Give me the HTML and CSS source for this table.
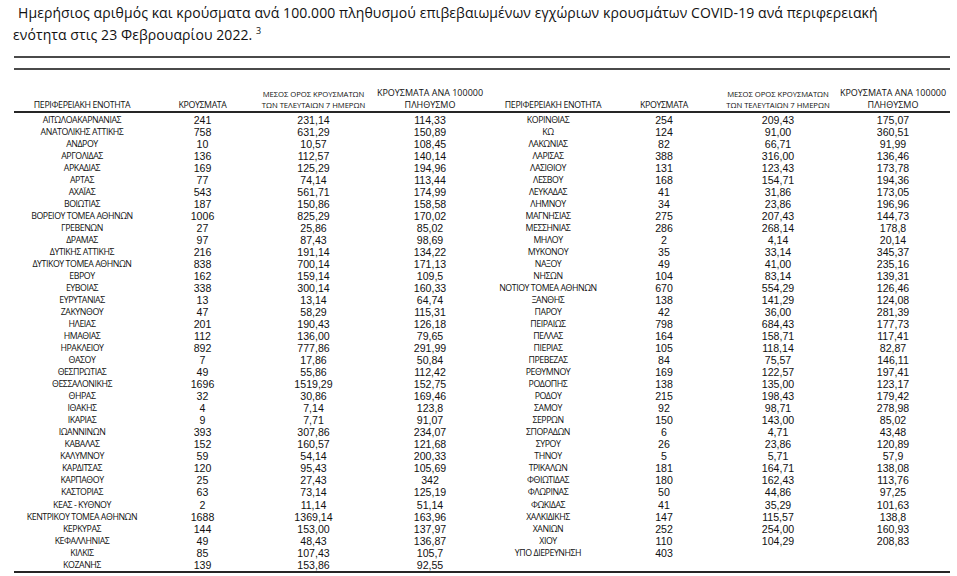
FILE: index.html
```html
<!DOCTYPE html>
<html lang="el">
<head>
<meta charset="utf-8">
<title>Κρούσματα COVID-19 ανά περιφερειακή ενότητα</title>
<link rel="stylesheet" href="styles.css">
</head>
<body>
<div class="page">
  <h1 class="title">
    <span class="title-line first">Ημερήσιος αριθμός και κρούσματα ανά 100.000 πληθυσμού επιβεβαιωμένων εγχώριων κρουσμάτων COVID-19 ανά περιφερειακή</span>
    <span class="title-line">ενότητα στις 23 Φεβρουαρίου 2022. <sup class="note">3</sup></span>
  </h1>
  <div class="rule rule-a"></div>
  <div class="rule rule-b"></div>
  <table class="data">
    <colgroup>
      <col class="c-name-l"><col class="c-cnt-l"><col class="c-avg-l"><col class="c-per-l">
      <col class="c-name-r"><col class="c-cnt-r"><col class="c-avg-r"><col class="c-per-r">
    </colgroup>
    <thead>
      <tr>
        <th class="h-name">ΠΕΡΙΦΕΡΕΙΑΚΗ ΕΝΟΤΗΤΑ</th>
        <th class="h-name">ΚΡΟΥΣΜΑΤΑ</th>
        <th class="h-avg">ΜΕΣΟΣ ΟΡΟΣ ΚΡΟΥΣΜΑΤΩΝ<br>ΤΩΝ ΤΕΛΕΥΤΑΙΩΝ 7 ΗΜΕΡΩΝ</th>
        <th class="h-per">ΚΡΟΥΣΜΑΤΑ ΑΝΑ 100000<br>ΠΛΗΘΥΣΜΟ</th>
        <th class="h-name h-shift">ΠΕΡΙΦΕΡΕΙΑΚΗ ΕΝΟΤΗΤΑ</th>
        <th class="h-name">ΚΡΟΥΣΜΑΤΑ</th>
        <th class="h-avg">ΜΕΣΟΣ ΟΡΟΣ ΚΡΟΥΣΜΑΤΩΝ<br>ΤΩΝ ΤΕΛΕΥΤΑΙΩΝ 7 ΗΜΕΡΩΝ</th>
        <th class="h-per">ΚΡΟΥΣΜΑΤΑ ΑΝΑ 100000<br>ΠΛΗΘΥΣΜΟ</th>
      </tr>
    </thead>
    <tbody>
      <tr><td class="n">ΑΙΤΩΛΟΑΚΑΡΝΑΝΙΑΣ</td><td>241</td><td>231,14</td><td>114,33</td><td class="n">ΚΟΡΙΝΘΙΑΣ</td><td>254</td><td>209,43</td><td>175,07</td></tr>
      <tr><td class="n">ΑΝΑΤΟΛΙΚΗΣ ΑΤΤΙΚΗΣ</td><td>758</td><td>631,29</td><td>150,89</td><td class="n">ΚΩ</td><td>124</td><td>91,00</td><td>360,51</td></tr>
      <tr><td class="n">ΑΝΔΡΟΥ</td><td>10</td><td>10,57</td><td>108,45</td><td class="n">ΛΑΚΩΝΙΑΣ</td><td>82</td><td>66,71</td><td>91,99</td></tr>
      <tr><td class="n">ΑΡΓΟΛΙΔΑΣ</td><td>136</td><td>112,57</td><td>140,14</td><td class="n">ΛΑΡΙΣΑΣ</td><td>388</td><td>316,00</td><td>136,46</td></tr>
      <tr><td class="n">ΑΡΚΑΔΙΑΣ</td><td>169</td><td>125,29</td><td>194,96</td><td class="n">ΛΑΣΙΘΙΟΥ</td><td>131</td><td>123,43</td><td>173,78</td></tr>
      <tr><td class="n">ΑΡΤΑΣ</td><td>77</td><td>74,14</td><td>113,44</td><td class="n">ΛΕΣΒΟΥ</td><td>168</td><td>154,71</td><td>194,36</td></tr>
      <tr><td class="n">ΑΧΑΪΑΣ</td><td>543</td><td>561,71</td><td>174,99</td><td class="n">ΛΕΥΚΑΔΑΣ</td><td>41</td><td>31,86</td><td>173,05</td></tr>
      <tr><td class="n">ΒΟΙΩΤΙΑΣ</td><td>187</td><td>150,86</td><td>158,58</td><td class="n">ΛΗΜΝΟΥ</td><td>34</td><td>23,86</td><td>196,96</td></tr>
      <tr><td class="n">ΒΟΡΕΙΟΥ ΤΟΜΕΑ ΑΘΗΝΩΝ</td><td>1006</td><td>825,29</td><td>170,02</td><td class="n">ΜΑΓΝΗΣΙΑΣ</td><td>275</td><td>207,43</td><td>144,73</td></tr>
      <tr><td class="n">ΓΡΕΒΕΝΩΝ</td><td>27</td><td>25,86</td><td>85,02</td><td class="n">ΜΕΣΣΗΝΙΑΣ</td><td>286</td><td>268,14</td><td>178,8</td></tr>
      <tr><td class="n">ΔΡΑΜΑΣ</td><td>97</td><td>87,43</td><td>98,69</td><td class="n">ΜΗΛΟΥ</td><td>2</td><td>4,14</td><td>20,14</td></tr>
      <tr><td class="n">ΔΥΤΙΚΗΣ ΑΤΤΙΚΗΣ</td><td>216</td><td>191,14</td><td>134,22</td><td class="n">ΜΥΚΟΝΟΥ</td><td>35</td><td>33,14</td><td>345,37</td></tr>
      <tr><td class="n">ΔΥΤΙΚΟΥ ΤΟΜΕΑ ΑΘΗΝΩΝ</td><td>838</td><td>700,14</td><td>171,13</td><td class="n">ΝΑΞΟΥ</td><td>49</td><td>41,00</td><td>235,16</td></tr>
      <tr><td class="n">ΕΒΡΟΥ</td><td>162</td><td>159,14</td><td>109,5</td><td class="n">ΝΗΣΩΝ</td><td>104</td><td>83,14</td><td>139,31</td></tr>
      <tr><td class="n">ΕΥΒΟΙΑΣ</td><td>338</td><td>300,14</td><td>160,33</td><td class="n">ΝΟΤΙΟΥ ΤΟΜΕΑ ΑΘΗΝΩΝ</td><td>670</td><td>554,29</td><td>126,46</td></tr>
      <tr><td class="n">ΕΥΡΥΤΑΝΙΑΣ</td><td>13</td><td>13,14</td><td>64,74</td><td class="n">ΞΑΝΘΗΣ</td><td>138</td><td>141,29</td><td>124,08</td></tr>
      <tr><td class="n">ΖΑΚΥΝΘΟΥ</td><td>47</td><td>58,29</td><td>115,31</td><td class="n">ΠΑΡΟΥ</td><td>42</td><td>36,00</td><td>281,39</td></tr>
      <tr><td class="n">ΗΛΕΙΑΣ</td><td>201</td><td>190,43</td><td>126,18</td><td class="n">ΠΕΙΡΑΙΩΣ</td><td>798</td><td>684,43</td><td>177,73</td></tr>
      <tr><td class="n">ΗΜΑΘΙΑΣ</td><td>112</td><td>136,00</td><td>79,65</td><td class="n">ΠΕΛΛΑΣ</td><td>164</td><td>158,71</td><td>117,41</td></tr>
      <tr><td class="n">ΗΡΑΚΛΕΙΟΥ</td><td>892</td><td>777,86</td><td>291,99</td><td class="n">ΠΙΕΡΙΑΣ</td><td>105</td><td>118,14</td><td>82,87</td></tr>
      <tr><td class="n">ΘΑΣΟΥ</td><td>7</td><td>17,86</td><td>50,84</td><td class="n">ΠΡΕΒΕΖΑΣ</td><td>84</td><td>75,57</td><td>146,11</td></tr>
      <tr><td class="n">ΘΕΣΠΡΩΤΙΑΣ</td><td>49</td><td>55,86</td><td>112,42</td><td class="n">ΡΕΘΥΜΝΟΥ</td><td>169</td><td>122,57</td><td>197,41</td></tr>
      <tr><td class="n">ΘΕΣΣΑΛΟΝΙΚΗΣ</td><td>1696</td><td>1519,29</td><td>152,75</td><td class="n">ΡΟΔΟΠΗΣ</td><td>138</td><td>135,00</td><td>123,17</td></tr>
      <tr><td class="n">ΘΗΡΑΣ</td><td>32</td><td>30,86</td><td>169,46</td><td class="n">ΡΟΔΟΥ</td><td>215</td><td>198,43</td><td>179,42</td></tr>
      <tr><td class="n">ΙΘΑΚΗΣ</td><td>4</td><td>7,14</td><td>123,8</td><td class="n">ΣΑΜΟΥ</td><td>92</td><td>98,71</td><td>278,98</td></tr>
      <tr><td class="n">ΙΚΑΡΙΑΣ</td><td>9</td><td>7,71</td><td>91,07</td><td class="n">ΣΕΡΡΩΝ</td><td>150</td><td>143,00</td><td>85,02</td></tr>
      <tr><td class="n">ΙΩΑΝΝΙΝΩΝ</td><td>393</td><td>307,86</td><td>234,07</td><td class="n">ΣΠΟΡΑΔΩΝ</td><td>6</td><td>4,71</td><td>43,48</td></tr>
      <tr><td class="n">ΚΑΒΑΛΑΣ</td><td>152</td><td>160,57</td><td>121,68</td><td class="n">ΣΥΡΟΥ</td><td>26</td><td>23,86</td><td>120,89</td></tr>
      <tr><td class="n">ΚΑΛΥΜΝΟΥ</td><td>59</td><td>54,14</td><td>200,33</td><td class="n">ΤΗΝΟΥ</td><td>5</td><td>5,71</td><td>57,9</td></tr>
      <tr><td class="n">ΚΑΡΔΙΤΣΑΣ</td><td>120</td><td>95,43</td><td>105,69</td><td class="n">ΤΡΙΚΑΛΩΝ</td><td>181</td><td>164,71</td><td>138,08</td></tr>
      <tr><td class="n">ΚΑΡΠΑΘΟΥ</td><td>25</td><td>27,43</td><td>342</td><td class="n">ΦΘΙΩΤΙΔΑΣ</td><td>180</td><td>162,43</td><td>113,76</td></tr>
      <tr><td class="n">ΚΑΣΤΟΡΙΑΣ</td><td>63</td><td>73,14</td><td>125,19</td><td class="n">ΦΛΩΡΙΝΑΣ</td><td>50</td><td>44,86</td><td>97,25</td></tr>
      <tr><td class="n">ΚΕΑΣ - ΚΥΘΝΟΥ</td><td>2</td><td>11,14</td><td>51,14</td><td class="n">ΦΩΚΙΔΑΣ</td><td>41</td><td>35,29</td><td>101,63</td></tr>
      <tr><td class="n">ΚΕΝΤΡΙΚΟΥ ΤΟΜΕΑ ΑΘΗΝΩΝ</td><td>1688</td><td>1369,14</td><td>163,96</td><td class="n">ΧΑΛΚΙΔΙΚΗΣ</td><td>147</td><td>115,57</td><td>138,8</td></tr>
      <tr><td class="n">ΚΕΡΚΥΡΑΣ</td><td>144</td><td>153,00</td><td>137,97</td><td class="n">ΧΑΝΙΩΝ</td><td>252</td><td>254,00</td><td>160,93</td></tr>
      <tr><td class="n">ΚΕΦΑΛΛΗΝΙΑΣ</td><td>49</td><td>48,43</td><td>136,87</td><td class="n">ΧΙΟΥ</td><td>110</td><td>104,29</td><td>208,83</td></tr>
      <tr><td class="n">ΚΙΛΚΙΣ</td><td>85</td><td>107,43</td><td>105,7</td><td class="n">ΥΠΟ ΔΙΕΡΕΥΝΗΣΗ</td><td>403</td><td></td><td></td></tr>
      <tr><td class="n">ΚΟΖΑΝΗΣ</td><td>139</td><td>153,86</td><td>92,55</td><td class="n"></td><td></td><td></td><td></td></tr>
    </tbody>
  </table>
</div>
</body>
</html>
```

FILE: styles.css
```css
html, body {
  margin: 0;
  padding: 0;
  background: #ffffff;
}

body {
  font-family: "Open Sans", "Noto Sans", "DejaVu Sans", sans-serif;
  color: #111111;
  width: 957px;
  height: 576px;
  overflow: hidden;
}

.page {
  padding-top: 1.6px;
}

.title {
  margin: 0;
  padding-left: 13px;
  font-size: 14px;
  font-weight: 400;
  line-height: 22.5px;
  letter-spacing: 0.08px;
  color: #111111;
}

.title-line {
  display: block;
  white-space: nowrap;
}

.title-line.first {
  padding-left: 5px;
}

.note {
  font-size: 9px;
  line-height: 0;
  vertical-align: 6px;
  letter-spacing: 0;
}

.rule {
  margin-left: 14px;
  width: 936px;
  border-top: 2px solid #4a4a4a;
}

.rule-a {
  margin-top: 9.4px;
}

.rule-b {
  margin-top: 10px;
}

.data {
  margin-left: 14px;
  width: 936px;
  table-layout: fixed;
  border-collapse: collapse;
  border-bottom: 2px solid #262626;
}

.c-name-l { width: 136px; }
.c-cnt-l  { width: 105px; }
.c-avg-l  { width: 117px; }
.c-per-l  { width: 116px; }
.c-name-r { width: 120px; }
.c-cnt-r  { width: 112px; }
.c-avg-r  { width: 116px; }
.c-per-r  { width: 114px; }

.data th {
  height: 41.5px;
  padding: 0;
  vertical-align: bottom;
  text-align: center;
  font-weight: 400;
  line-height: 11px;
  white-space: nowrap;
  border-bottom: 2px solid #262626;
  color: #111111;
}

.h-name {
  font-size: 8.8px;
  letter-spacing: -0.35px;
}

.h-shift {
  padding-left: 10px !important;
}

.h-avg {
  font-size: 7.7px;
  letter-spacing: -0.05px;
}

.data th.h-per {
  font-size: 9px;
  line-height: 12.3px;
  letter-spacing: 0;
  padding-bottom: 0;
}

.data td {
  height: 12.04px;
  padding: 0;
  text-align: center;
  vertical-align: middle;
  font-family: "Liberation Sans", Arial, sans-serif;
  font-size: 10.6px;
  line-height: 12px;
  white-space: nowrap;
  color: #111111;
}

.data td.n {
  font-family: "Open Sans", "Noto Sans", sans-serif;
  font-size: 8.8px;
  letter-spacing: -0.45px;
}
```
